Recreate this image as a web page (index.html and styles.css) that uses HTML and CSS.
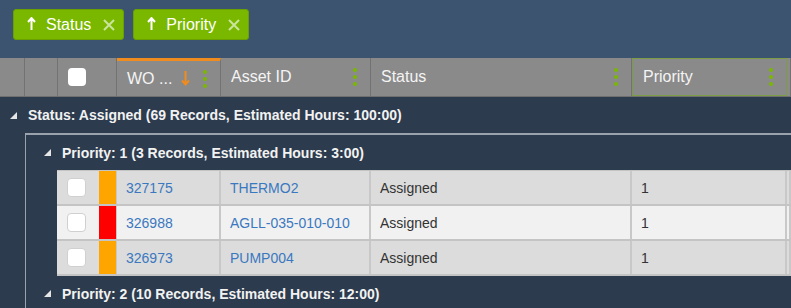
FILE: index.html
```html
<!DOCTYPE html>
<html lang="en">
<head>
    <meta charset="UTF-8">
    <title>Work Orders Grid</title>
    <link rel="stylesheet" href="styles.css">
</head>
<body>

    <!-- Grouping chips -->
    <div class="group-bar">
        <div class="chip">
            <svg class="chip-arrow" width="9" height="14" viewBox="0 0 9 14"><path d="M4.5 1 V13 M1 5 L4.5 1 L8 5" fill="none" stroke="#fff" stroke-width="2"/></svg>
            <span class="chip-label">Status</span>
            <svg class="chip-close" width="12" height="12" viewBox="0 0 12 12"><path d="M1 1 L11 11 M11 1 L1 11" stroke="#c9e59c" stroke-width="2"/></svg>
        </div>
        <div class="chip">
            <svg class="chip-arrow" width="9" height="14" viewBox="0 0 9 14"><path d="M4.5 1 V13 M1 5 L4.5 1 L8 5" fill="none" stroke="#fff" stroke-width="2"/></svg>
            <span class="chip-label">Priority</span>
            <svg class="chip-close" width="12" height="12" viewBox="0 0 12 12"><path d="M1 1 L11 11 M11 1 L1 11" stroke="#c9e59c" stroke-width="2"/></svg>
        </div>
    </div>

    <!-- Column headers -->
    <div class="grid-header">
        <div class="hcell c-indent"></div>
        <div class="hcell c-indent2"></div>
        <div class="hcell c-check"><span class="check check-head"></span></div>
        <div class="hcell c-wo sorted">
            <span class="htext">WO ...</span>
            <svg class="sort-arrow" width="9" height="15" viewBox="0 0 9 15"><path d="M4.5 0 V13 M1 9.5 L4.5 13.5 L8 9.5" fill="none" stroke="#f08c1e" stroke-width="2"/></svg>
            <span class="kebab"><i></i><i></i><i></i></span>
        </div>
        <div class="hcell c-asset"><span class="htext">Asset ID</span><span class="kebab"><i></i><i></i><i></i></span></div>
        <div class="hcell c-status"><span class="htext">Status</span><span class="kebab"><i></i><i></i><i></i></span></div>
        <div class="hcell c-priority focused"><span class="htext">Priority</span><span class="kebab"><i></i><i></i><i></i></span></div>
        <div class="hcell c-rest"></div>
    </div>

    <div class="grid-body">
        <div class="group-row level-1"><span class="tri"></span>Status: Assigned (69 Records, Estimated Hours: 100:00)</div>

        <div class="nested">
            <div class="group-row level-2"><span class="tri"></span>Priority: 1 (3 Records, Estimated Hours: 3:00)</div>

            <div class="rows">
                <div class="row">
                    <div class="cell r-check"><span class="check"></span></div>
                    <div class="cell r-flag flag-orange"></div>
                    <div class="cell c-wo"><a href="#">327175</a></div>
                    <div class="cell c-asset"><a href="#">THERMO2</a></div>
                    <div class="cell c-status">Assigned</div>
                    <div class="cell c-priority">1</div>
                    <div class="cell c-rest"></div>
                </div>
                <div class="row alt">
                    <div class="cell r-check"><span class="check"></span></div>
                    <div class="cell r-flag flag-red"></div>
                    <div class="cell c-wo"><a href="#">326988</a></div>
                    <div class="cell c-asset"><a href="#">AGLL-035-010-010</a></div>
                    <div class="cell c-status">Assigned</div>
                    <div class="cell c-priority">1</div>
                    <div class="cell c-rest"></div>
                </div>
                <div class="row">
                    <div class="cell r-check"><span class="check"></span></div>
                    <div class="cell r-flag flag-orange"></div>
                    <div class="cell c-wo"><a href="#">326973</a></div>
                    <div class="cell c-asset"><a href="#">PUMP004</a></div>
                    <div class="cell c-status">Assigned</div>
                    <div class="cell c-priority">1</div>
                    <div class="cell c-rest"></div>
                </div>
            </div>

            <div class="group-row level-2"><span class="tri"></span>Priority: 2 (10 Records, Estimated Hours: 12:00)</div>
        </div>
    </div>

</body>
</html>
```

FILE: styles.css
```css
/* General page styling */
body {
    margin: 0;
    font-family: "Liberation Sans", Arial, sans-serif;
    background-color: #2c3b4e;
    overflow: hidden;
}

/* --- Grouping bar --- */
.group-bar {
    display: flex;
    gap: 9px;
    height: 58px;
    padding: 9px 13px 0;
    box-sizing: border-box;
    background-color: #3d5470;
}

.chip {
    display: flex;
    align-items: center;
    height: 31px;
    padding: 0 8px 0 13px;
    box-sizing: border-box;
    background-color: #7ab800;
    border: 1px solid #6aa000;
    border-radius: 3px;
    color: #fff;
    font-size: 16px;
}

.chip-arrow {
    margin-right: 10px;
    margin-top: -2px;
}

.chip-label {
    margin-right: 12px;
}

/* --- Header row --- */
.grid-header {
    display: flex;
    height: 38px;
    background-color: #8a8a8a;
    border-bottom: 1px solid #6f6f6f;
}

.hcell {
    display: flex;
    align-items: center;
    box-sizing: border-box;
    border-right: 1px solid #727272;
    color: #f4f4f4;
    font-size: 16px;
    padding-left: 10px;
}

.hcell.c-indent,
.hcell.c-indent2,
.hcell.c-rest {
    padding-left: 0;
}

.hcell .htext {
    flex: 1;
}

.hcell.sorted {
    border-top: 3px solid #f08c1e;
}

.hcell.sorted .htext {
    flex: 0 0 auto;
}

.sort-arrow {
    margin-left: 9px;
    margin-right: auto;
}

.hcell.focused {
    border: 1px solid #7c9c46;
}

/* three green dots menu */
.kebab {
    display: flex;
    flex-direction: column;
    gap: 3px;
    margin-right: 13px;
}

.kebab i {
    display: block;
    width: 4px;
    height: 4px;
    border-radius: 50%;
    background-color: #7ab800;
}

/* column widths (shared by header and rows) */
.c-indent { width: 25px; }
.c-indent2 { width: 33px; }
.c-check { width: 59px; }
.c-wo { width: 104px; }
.c-asset { width: 150px; }
.c-status { width: 261px; }
.c-priority { width: 155px; }
.c-rest { flex: 1; }

.check {
    display: block;
    width: 17px;
    height: 17px;
    background-color: #fff;
    border: 1px solid #d0d0d0;
    border-radius: 4px;
}

.check-head {
    width: 18px;
    height: 18px;
    border: none;
}

/* --- Body --- */
.group-row {
    display: flex;
    align-items: center;
    height: 36px;
    color: #f2f2f2;
    font-size: 14px;
    font-weight: bold;
}

.level-1 {
    padding-left: 10px;
}

.level-2 {
    height: 35px;
    padding-left: 18px;
}

.tri {
    width: 0;
    height: 0;
    border-left: 7px solid transparent;
    border-bottom: 7px solid #e6e6e6;
    margin-right: 11px;
}

.nested {
    margin-left: 25px;
    border-top: 2px solid #9aa3ad;
    border-left: 1px solid #9aa3ad;
}

.rows {
    margin-left: 31px;
    border-top: 1px solid #c4c4c4;
}

.row {
    display: flex;
    height: 35px;
    background-color: #dcdcdc;
    border-bottom: 2px solid #c4c4c4;
    box-sizing: border-box;
}

.row.alt {
    background-color: #f1f1f1;
}

.cell {
    display: flex;
    align-items: center;
    box-sizing: border-box;
    padding-left: 9px;
    border-right: 2px solid #c8c8c8;
    color: #333;
    font-size: 14px;
}

.cell.c-rest {
    padding-left: 0;
}

.r-check {
    width: 42px;
    padding-left: 10px;
    border-right: none;
}

.r-flag {
    width: 18px;
    padding-left: 0;
    border-right: 1px solid #c8c8c8;
}

.flag-orange { background-color: #ffa500; }
.flag-red { background-color: #ff0000; }

.cell a {
    color: #3a78c0;
    text-decoration: none;
}
```
